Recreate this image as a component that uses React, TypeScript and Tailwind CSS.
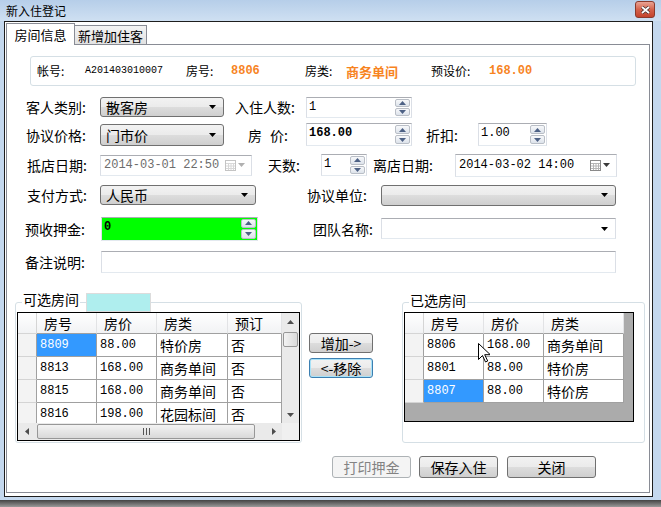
import React from 'react';

const CJK = "font-['Noto_Sans_CJK_SC',sans-serif]";
const MONO = "font-['Liberation_Mono','Noto_Sans_CJK_SC',monospace]";
const TB = 'border border-[#abadb3] border-l-[#dbdfe6] border-r-[#dbdfe6] border-b-[#e3e9ef] bg-white';
const BTN_BG = 'bg-[linear-gradient(to_bottom,#f2f2f2_0%,#ebebeb_50%,#dddddd_50%,#cfcfcf_100%)]';

const Caret = ({ color = '#000', up = false }: { color?: string; up?: boolean }) => (
  <svg width="7" height="4" viewBox="0 0 7 4">
    <path d={up ? 'M0 4h7L3.5 0z' : 'M0 0h7L3.5 4z'} fill={color} />
  </svg>
);

const Lbl: React.FC<{ className?: string; children: React.ReactNode }> = ({ className = '', children }) => (
  <div className={`${CJK} text-[14px] leading-none text-black whitespace-nowrap ${className}`}>{children}</div>
);

// button-look dropdown list
const Combo: React.FC<{ className: string; text?: string }> = ({ className, text }) => (
  <div className={`flex items-center justify-between rounded-[3px] border border-[#707070] ${BTN_BG} pl-[5px] pr-[7px] ${className}`}>
    <span className={`${CJK} text-[14px] leading-none`}>{text}</span>
    <Caret />
  </div>
);

const EditCombo: React.FC<{ className: string }> = ({ className }) => (
  <div className={`flex items-center justify-end ${TB} pr-[7px] ${className}`}>
    <Caret />
  </div>
);

const SpinBtns = () => (
  <div className="flex flex-col gap-[1px] w-[16px] h-full py-[1px] pr-[1px]">
    <div className="flex-1 flex items-center justify-center rounded-[2px] border border-[#b9bec6] bg-gradient-to-b from-[#f7f8fa] to-[#dde3eb]">
      <Caret up color="#4d6185" />
    </div>
    <div className="flex-1 flex items-center justify-center rounded-[2px] border border-[#b9bec6] bg-gradient-to-b from-[#f7f8fa] to-[#dde3eb]">
      <Caret color="#4d6185" />
    </div>
  </div>
);

const Spin: React.FC<{ className: string; value: string; bold?: boolean; bg?: string }> = ({ className, value, bold, bg = '' }) => (
  <div className={`flex justify-between ${TB} ${bg} ${className}`}>
    <span className={`${MONO} text-[12px] leading-none pl-[2px] pt-[3px] ${bold ? 'font-bold' : ''}`}>{value}</span>
    <SpinBtns />
  </div>
);

const CalIcon = ({ dim }: { dim?: boolean }) => (
  <div className="flex items-center gap-[2px]">
    <svg width="11" height="11" viewBox="0 0 11 11">
      <rect x="0.5" y="0.5" width="10" height="10" fill="#fff" stroke={dim ? '#c4c4c4' : '#8a8a8a'} />
      <path d="M1 3.5h9M1 6h9M1 8.5h9M3.5 3v7M6 3v7M8.5 3v7" stroke={dim ? '#d8d8d8' : '#b4b4b4'} />
    </svg>
    <Caret color={dim ? '#b0b0b0' : '#3a3a3a'} />
  </div>
);

const DateBox: React.FC<{ className: string; value: string; disabled?: boolean }> = ({ className, value, disabled }) => (
  <div className={`flex items-center justify-between ${TB} pl-[3px] pr-[6px] ${className}`}>
    <span className={`${MONO} text-[12px] leading-none ${disabled ? 'text-[#6d6d6d]' : 'text-black'}`}>{value}</span>
    <CalIcon dim={disabled} />
  </div>
);

const Btn: React.FC<{ className: string; children: React.ReactNode; kind?: 'focus' | 'disabled' }> = ({ className, children, kind }) => {
  const look =
    kind === 'disabled'
      ? 'border-[#adb2b5] bg-[#f4f4f4] text-[#838383]'
      : kind === 'focus'
      ? `border-[#3c7fb1] ${BTN_BG} shadow-[inset_0_0_0_1px_#a8e2f8] text-black`
      : `border-[#707070] ${BTN_BG} text-black`;
  return (
    <div className={`flex items-center justify-center rounded-[3px] border ${look} ${CJK} text-[14px] leading-none ${className}`}>
      {children}
    </div>
  );
};

type Cell = { w: string; text: string; mono?: boolean; sel?: boolean };

const DataRow: React.FC<{ cells: Cell[] }> = ({ cells }) => (
  <div className="flex h-[23px] shrink-0">
    <div className="w-[19px] border-r border-b border-r-[#a0a0a0] border-b-[#d4d4d4] bg-[#f3f3f3]" />
    {cells.map((c, i) => (
      <div
        key={i}
        className={`${c.w} flex items-center border-r border-b border-[#a0a0a0] pl-[3px] ${c.sel ? 'bg-[#3399ff] text-white' : 'bg-white text-black'} ${
          c.mono ? `${MONO} text-[12px]` : `${CJK} text-[14px]`
        } leading-none whitespace-nowrap overflow-hidden`}
      >
        {c.text}
      </div>
    ))}
  </div>
);

const HeadRow: React.FC<{ cols: { w: string; text: string }[] }> = ({ cols }) => (
  <div className="flex h-[21px] shrink-0 bg-gradient-to-b from-white to-[#f1f2f4]">
    <div className="w-[19px] border-r border-b border-[#d5d5d5]" />
    {cols.map((c, i) => (
      <div key={i} className={`${c.w} flex items-center border-r border-b border-r-[#e2e3e5] border-b-[#a0a0a0] pl-[7px] ${CJK} text-[14px] leading-none`}>
        {c.text}
      </div>
    ))}
  </div>
);

const ScrollBox: React.FC<{ className: string; children: React.ReactNode }> = ({ className, children }) => (
  <div className={`flex items-center justify-center ${className}`}>{children}</div>
);

const SideArrow = ({ left }: { left?: boolean }) => (
  <svg width="4" height="7" viewBox="0 0 4 7">
    <path d={left ? 'M4 0v7L0 3.5z' : 'M0 0v7l4-3.5z'} fill="#4d4d4d" />
  </svg>
);

function LeftGrid() {
  const cols = [
    { w: 'w-[60px]', text: '房号' },
    { w: 'w-[60px]', text: '房价' },
    { w: 'w-[71px]', text: '房类' },
    { w: 'w-[54px]', text: '预订' },
  ];
  const rows: [string, string, string, string][] = [
    ['8809', '88.00', '特价房', '否'],
    ['8813', '168.00', '商务单间', '否'],
    ['8815', '168.00', '商务单间', '否'],
    ['8816', '198.00', '花园标间', '否'],
  ];
  return (
    <div className="ml-[1px] mt-[9px] w-[283px] h-[129px] border border-black bg-white flex flex-col">
      <div className="flex h-[110px]">
        <div className="w-[264px] flex flex-col overflow-hidden">
          <HeadRow cols={cols} />
          {rows.map((r, i) => (
            <DataRow
              key={i}
              cells={[
                { w: 'w-[60px]', text: r[0], mono: true, sel: i === 0 },
                { w: 'w-[60px]', text: r[1], mono: true },
                { w: 'w-[71px]', text: r[2] },
                { w: 'w-[54px]', text: r[3] },
              ]}
            />
          ))}
        </div>
        {/* vertical scrollbar */}
        <div className="w-[17px] flex flex-col bg-[#eaeaea]">
          <ScrollBox className="h-[17px]">
            <Caret up color="#4d4d4d" />
          </ScrollBox>
          <div className="mx-[1px] mt-[2px] h-[15px] rounded-[2px] border border-[#979797] bg-gradient-to-r from-[#f3f3f3] to-[#d9d9d9]" />
          <div className="flex-1" />
          <ScrollBox className="h-[17px]">
            <Caret color="#4d4d4d" />
          </ScrollBox>
        </div>
      </div>
      {/* horizontal scrollbar */}
      <div className="flex h-[17px]">
        <div className="w-[264px] flex items-center bg-[#eaeaea]">
          <ScrollBox className="w-[17px] h-full">
            <SideArrow left />
          </ScrollBox>
          <div className="ml-[2px] w-[218px] h-[15px] rounded-[2px] border border-[#979797] bg-gradient-to-b from-[#f3f3f3] to-[#d9d9d9] flex items-center justify-center gap-[2px]">
            <div className="w-[1px] h-[7px] bg-[#555]" />
            <div className="w-[1px] h-[7px] bg-[#555]" />
            <div className="w-[1px] h-[7px] bg-[#555]" />
          </div>
          <div className="flex-1" />
          <ScrollBox className="w-[17px] h-full">
            <SideArrow />
          </ScrollBox>
        </div>
        <div className="w-[17px] bg-[#f0f0f0]" />
      </div>
    </div>
  );
}

function RightGrid() {
  const cols = [
    { w: 'w-[60px]', text: '房号' },
    { w: 'w-[60px]', text: '房价' },
    { w: 'w-[80px]', text: '房类' },
  ];
  const rows: [string, string, string][] = [
    ['8806', '168.00', '商务单间'],
    ['8801', '88.00', '特价房'],
    ['8807', '88.00', '特价房'],
  ];
  return (
    <div className="relative ml-[1px] mt-[9px] w-[230px] h-[110px] border border-black bg-[#ababab]">
      <div className="w-[219px] flex flex-col">
        <HeadRow cols={cols} />
        {rows.map((r, i) => (
          <DataRow
            key={i}
            cells={[
              { w: 'w-[60px]', text: r[0], mono: true, sel: i === 2 },
              { w: 'w-[60px]', text: r[1], mono: true },
              { w: 'w-[80px]', text: r[2] },
            ]}
          />
        ))}
      </div>
      {/* mouse pointer */}
      <svg className="absolute left-[73px] top-[30px]" width="12" height="20" viewBox="0 0 12 20">
        <path d="M0.5 0.5v16l4-4 3 6.5 2.2-1-3-6.3h5.6z" fill="#fff" stroke="#000" strokeWidth="1" strokeLinejoin="round" />
      </svg>
    </div>
  );
}

export default function App() {
  return (
    <div className="w-[661px] h-[507px] overflow-hidden flex flex-col bg-[#6a6a6a]">
      <div className="h-[500px] flex flex-col bg-[#c4d8ee]">
        {/* title bar */}
        <div className="h-[21px] flex items-start justify-between bg-gradient-to-b from-[#b6cee9] to-[#cfe0f2] pl-[6px] pr-[6px]">
          <span className={`${CJK} text-[12px] leading-none mt-[5px] text-black`}>新入住登记</span>
          <div className="mt-[1px] w-[20px] h-[17px] rounded-[3px] border border-[#8a3a2c] bg-gradient-to-b from-[#e9a394] via-[#d4624b] to-[#c4432c] flex items-center justify-center">
            <svg width="9" height="8" viewBox="0 0 9 8">
              <path d="M1 1l7 6M8 1L1 7" stroke="#3a2a2a" strokeWidth="3.2" />
              <path d="M1 1l7 6M8 1L1 7" stroke="#fff" strokeWidth="1.8" />
            </svg>
          </div>
        </div>

        {/* client area */}
        <div className="ml-[4px] w-[649px] h-[476px] border border-[#1e1e1e] bg-white">
          <div className="ml-[1px] flex flex-col">
            {/* tabs */}
            <div className="flex items-end h-[22px]">
              <div className={`relative z-10 -mb-[1px] w-[69px] h-[22px] border border-b-0 border-[#898c95] bg-white flex items-center justify-center ${CJK} text-[13px] leading-none`}>
                房间信息
              </div>
              <div className={`w-[72px] h-[19px] border border-l-0 border-b-0 border-[#898c95] bg-gradient-to-b from-[#f3f3f3] to-[#e2e2e2] flex items-center justify-center ${CJK} text-[13px] leading-none`}>
                新增加住客
              </div>
            </div>

            {/* tab page */}
            <div className="w-[644px] h-[449px] border border-[#898c95] bg-white flex flex-col">
              {/* info strip */}
              <div className="ml-[23px] mt-[11px] w-[606px] h-[30px] shrink-0 rounded-[3px] border border-[#d5dfe5] flex items-center">
                <span className={`ml-[6px] w-[48px] ${CJK} text-[12px] leading-none`}>帐号:</span>
                <span className={`w-[101px] ${MONO} text-[10px] leading-none`}>A201403010007</span>
                <span className={`w-[45px] ${CJK} text-[12px] leading-none`}>房号:</span>
                <span className={`w-[74px] ${MONO} text-[12px] font-bold leading-none text-[#f7841f]`}>8806</span>
                <span className={`w-[41px] ${CJK} text-[12px] leading-none`}>房类:</span>
                <span className={`w-[85px] ${CJK} text-[13px] font-bold leading-none text-[#f7841f]`}>商务单间</span>
                <span className={`w-[58px] ${CJK} text-[12px] leading-none`}>预设价:</span>
                <span className={`${MONO} text-[12px] font-bold leading-none text-[#f7841f]`}>168.00</span>
              </div>

              {/* row 1 */}
              <div className="mt-[10px] h-[22px] shrink-0 flex items-center">
                <Lbl className="ml-[19px] w-[74px]">客人类别:</Lbl>
                <Combo className="w-[124px] h-[20px]" text="散客房" />
                <Lbl className="ml-[11px] w-[71px]">入住人数:</Lbl>
                <Spin className="w-[106px] h-[21px]" value="1" />
              </div>

              {/* row 2 */}
              <div className="mt-[4px] h-[25px] shrink-0 flex items-center">
                <Lbl className="ml-[19px] w-[74px]">协议价格:</Lbl>
                <Combo className="w-[124px] h-[22px]" text="门市价" />
                <Lbl className="ml-[24px] w-[58px] flex">
                  <span>房</span>
                  <span className="ml-[8px]">价:</span>
                </Lbl>
                <Spin className="w-[106px] h-[23px]" value="168.00" bold />
                <Lbl className="ml-[14px] w-[52px]">折扣:</Lbl>
                <Spin className="w-[69px] h-[23px]" value="1.00" />
              </div>

              {/* row 3 */}
              <div className="mt-[6px] h-[24px] shrink-0 flex items-center">
                <Lbl className="ml-[20px] w-[73px]">抵店日期:</Lbl>
                <DateBox className="w-[152px] h-[21px]" value="2014-03-01 22:50" disabled />
                <Lbl className="ml-[16px] w-[53px]">天数:</Lbl>
                <Spin className="w-[46px] h-[22px]" value="1" />
                <Lbl className="ml-[6px] w-[82px]">离店日期:</Lbl>
                <DateBox className="w-[162px] h-[23px]" value="2014-03-02 14:00" />
              </div>

              {/* row 4 */}
              <div className="mt-[7px] h-[22px] shrink-0 flex items-center">
                <Lbl className="ml-[20px] w-[73px]">支付方式:</Lbl>
                <Combo className="w-[156px] h-[20px]" text="人民币" />
                <Lbl className="ml-[51px] w-[74px]">协议单位:</Lbl>
                <Combo className="w-[235px] h-[21px]" />
              </div>

              {/* row 5 */}
              <div className="mt-[10px] h-[25px] shrink-0 flex items-center">
                <Lbl className="ml-[18px] w-[76px]">预收押金:</Lbl>
                <Spin className="w-[157px] h-[24px]" value="0" bold bg="!bg-[#00ff00]" />
                <Lbl className="ml-[55px] w-[68px]">团队名称:</Lbl>
                <EditCombo className="w-[235px] h-[21px]" />
              </div>

              {/* row 6 */}
              <div className="mt-[9px] h-[24px] shrink-0 flex items-center">
                <Lbl className="ml-[18px] w-[76px]">备注说明:</Lbl>
                <div className={`w-[515px] h-[22px] ${TB}`} />
              </div>

              {/* room lists */}
              <div className="mt-[28px] shrink-0 flex items-start">
                <div className="relative ml-[8px] w-[287px] h-[141px] rounded-[3px] border border-[#d5dfe5]">
                  <span className={`absolute left-[6px] -top-[11px] bg-white px-[1px] ${CJK} text-[14px] leading-none`}>可选房间</span>
                  <div className="absolute left-[70px] -top-[10px] w-[65px] h-[19px] bg-[#afeeee] border border-[#dcdcdc]" />
                  <LeftGrid />
                </div>

                <div className="ml-[7px] mt-[31px] w-[64px] flex flex-col gap-[5px]">
                  <Btn className="h-[20px]">增加-&gt;</Btn>
                  <Btn className="h-[20px]" kind="focus">&lt;-移除</Btn>
                </div>

                <div className="relative ml-[29px] w-[243px] h-[141px] rounded-[3px] border border-[#d5dfe5]">
                  <span className={`absolute left-[6px] -top-[10px] bg-white px-[1px] ${CJK} text-[14px] leading-none`}>已选房间</span>
                  <RightGrid />
                </div>
              </div>

              {/* action buttons */}
              <div className="mt-[13px] ml-[325px] flex gap-[8px]">
                <Btn className="w-[79px] h-[22px]" kind="disabled">打印押金</Btn>
                <Btn className="w-[79px] h-[22px]">保存入住</Btn>
                <Btn className="ml-[1px] w-[89px] h-[22px]">关闭</Btn>
              </div>
            </div>
          </div>
        </div>
      </div>
      <div className="h-[7px] bg-gradient-to-b from-[#444] to-[#9a9a9a]" />
    </div>
  );
}
